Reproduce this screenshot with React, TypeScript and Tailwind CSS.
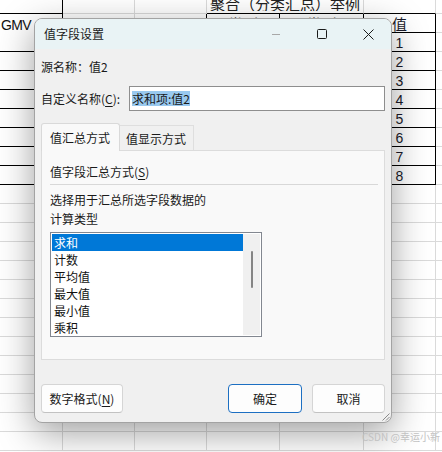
import React from "react";

const COLS = 7;
const ROWS = 24;

function cellClass(r: number, c: number): string {
  const inTable = r >= 1 && r <= 9;
  const rightBlack =
    (r === 0 && c === 0) || (inTable && (c === 0 || c === 2 || c === 3 || c === 4 || c === 5));
  const bottomBlack =
    (r === 0 && (c === 0 || c === 3 || c === 5)) ||
    (inTable && ((c === 0 && r !== 1) || c === 3 || c === 4 || c === 5));
  const bottomNone = r === 1 && c === 0;
  const right = rightBlack
    ? "border-r border-r-black"
    : c === 6
    ? ""
    : "border-r border-r-[#dadada]";
  const bottom = bottomNone ? "" : bottomBlack ? "border-b border-b-black" : "border-b border-b-[#dadada]";
  return `${right} ${bottom}`;
}

function cellContent(r: number, c: number): React.ReactNode {
  if (r === 0 && c === 3) {
    return (
      <div className="flex w-full justify-center overflow-hidden">
        <span className="mt-[-4px] whitespace-nowrap text-[15px] leading-[15px] text-[#222] font-['Noto_Sans_CJK_SC',sans-serif]">
          聚合（分类汇总）举例
        </span>
      </div>
    );
  }
  if (r === 1 && c === 0) {
    return (
      <div className="flex h-full items-center pl-[1px]">
        <span className="translate-y-[1px] text-[14px] leading-[14px] tracking-[-0.6px] text-[#111] font-['Liberation_Sans',sans-serif]">
          GMV
        </span>
      </div>
    );
  }
  if (r === 1 && (c === 3 || c === 4)) {
    return (
      <div className="flex h-full items-center justify-center text-[15px] leading-[15px] text-[#222] font-['Noto_Sans_CJK_SC',sans-serif]">
        类别
      </div>
    );
  }
  if (r === 1 && c === 5) {
    return (
      <div className="flex h-full items-center justify-center text-[15px] leading-[15px] text-[#1a1a2a] font-['Noto_Sans_CJK_SC',sans-serif]">
        值
      </div>
    );
  }
  if (r >= 2 && r <= 9 && c === 5) {
    return (
      <div className="flex h-full items-center justify-center pt-[1px] text-[14px] leading-[14px] text-[#1a1a2a] font-['Liberation_Sans',sans-serif]">
        {r - 1}
      </div>
    );
  }
  return null;
}

function Sheet() {
  const cells: React.ReactNode[] = [];
  for (let r = 0; r < ROWS; r++) {
    for (let c = 0; c < COLS; c++) {
      if (r === 0 && c === 4) continue;
      const span = r === 0 && c === 3 ? "col-span-2" : "";
      cells.push(
        <div key={`${r}-${c}`} className={`${cellClass(r, c)} ${span} min-w-0 overflow-visible`}>
          {cellContent(r, c)}
        </div>
      );
    }
  }
  return (
    <div className="grid grid-cols-[63px_72px_72px_73px_84px_72px_1fr] grid-rows-[14px_repeat(23,19px)]">
      {cells}
    </div>
  );
}

function Btn({ children, w, primary }: { children: React.ReactNode; w: string; primary?: boolean }) {
  return (
    <div
      className={`${w} flex h-[29px] items-center justify-center rounded-[4px] border bg-[#fdfdfd] text-[12px] leading-[16px] text-[#1a1a1a] ${
        primary ? "border-[#1c6fc2]" : "border-[#d5d5d5] border-b-[#c2c2c2]"
      }`}
    >
      {children}
    </div>
  );
}

function Dialog() {
  const items = ["求和", "计数", "平均值", "最大值", "最小值", "乘积"];
  return (
    <div className="absolute left-[34px] top-[18px] flex h-[405px] w-[358px] flex-col overflow-hidden rounded-[8px] border border-[#a3a3a3] bg-[#f0f0f0] shadow-[0_10px_36px_rgba(0,0,0,0.38)] font-['Noto_Sans_CJK_SC',sans-serif] text-[#1a1a1a]">
      <div className="flex h-[30px] shrink-0 items-center bg-[#e9f3f5]">
        <div className="pl-[9px] text-[12px] leading-[16px]">值字段设置</div>
        <div className="ml-auto flex h-full">
          <div className="flex h-full w-[46px] items-center justify-center">
            <svg width="10" height="10" viewBox="0 0 10 10">
              <line x1="1" y1="5.5" x2="9" y2="5.5" stroke="#a8a8a8" strokeWidth="1" />
            </svg>
          </div>
          <div className="flex h-full w-[46px] items-center justify-center">
            <svg width="10" height="10" viewBox="0 0 10 10">
              <rect x="0.5" y="0.5" width="9" height="9" rx="1" fill="none" stroke="#1a1a1a" strokeWidth="1" />
            </svg>
          </div>
          <div className="flex h-full w-[46px] items-center justify-center">
            <svg width="11" height="11" viewBox="0 0 11 11">
              <path d="M0.5 0.5 L10.5 10.5 M10.5 0.5 L0.5 10.5" stroke="#1a1a1a" strokeWidth="1" />
            </svg>
          </div>
        </div>
      </div>

      <div className="flex flex-1 flex-col px-[6px] pb-[9px]">
        <div className="mt-[10px] h-[16px] text-[12px] leading-[16px]">源名称：值2</div>

        <div className="mt-[11px] flex h-[25px] items-center">
          <div className="w-[88px] shrink-0 text-[12px] leading-[16px]">
            自定义名称(<span className="underline underline-offset-2">C</span>):
          </div>
          <div className="flex h-[25px] flex-1 items-center border border-[#8e8e8e] bg-white pl-[2px]">
            <span className="bg-[#99c9ef] text-[12px] leading-[15px]">求和项:值2</span>
          </div>
        </div>

        <div className="mt-[12px] flex h-[27px] items-end">
          <div className="relative z-10 -mb-px flex h-[28px] items-center rounded-t-[3px] border border-b-0 border-[#d9d9d9] bg-[#f9f9f9] pl-[8px] pr-[9px] text-[12px] leading-[16px]">
            值汇总方式
          </div>
          <div className="flex h-[25px] items-center border-r border-t border-[#dedede] bg-[#f0f0f0] pl-[6px] pr-[7px] pt-[1px] text-[12px] leading-[16px]">
            值显示方式
          </div>
        </div>

        <div className="flex h-[210px] flex-col border border-[#dcdcdc] bg-[#f9f9f9] pl-[8px] pr-[6px]">
          <div className="mt-[13px] h-[16px] text-[12px] leading-[16px]">
            值字段汇总方式(<span className="underline underline-offset-2">S</span>)
          </div>
          <div className="mt-[4px] h-px bg-[#d8d8d8]" />
          <div className="mt-[5px] text-[12px] leading-[19px]">
            <div>选择用于汇总所选字段数据的</div>
            <div>计算类型</div>
          </div>
          <div className="mt-[4px] flex h-[105px] w-[212px] border border-[#828790] bg-white p-px">
            <div className="flex w-[191px] flex-col">
              {items.map((it, i) => (
                <div
                  key={it}
                  className={`h-[17px] pl-[2px] text-[12px] leading-[17px] ${
                    i === 0 ? "bg-[#0078d7] text-white" : "text-[#111]"
                  }`}
                >
                  {it}
                </div>
              ))}
            </div>
            <div className="flex flex-1 justify-center bg-[#f0f0f0] pt-[17px]">
              <div className="h-[37px] w-[2px] rounded-full bg-[#858585]" />
            </div>
          </div>
        </div>

        <div className="mt-[24px] flex h-[29px] items-center">
          <Btn w="w-[82px]">
            数字格式(<span className="underline underline-offset-2">N</span>)
          </Btn>
          <div className="ml-auto flex gap-[10px]">
            <Btn w="w-[74px]" primary>
              确定
            </Btn>
            <Btn w="w-[73px]">取消</Btn>
          </div>
        </div>
      </div>

      <svg className="absolute bottom-[1px] right-[1px]" width="9" height="9" viewBox="0 0 9 9">
        <path d="M8.5 1.5 L1.5 8.5 M8.5 5 L5 8.5" stroke="#8a8a8a" strokeWidth="1" />
      </svg>
    </div>
  );
}

export default function App() {
  return (
    <div className="relative h-[452px] w-[442px] overflow-hidden bg-white">
      <Sheet />
      <Dialog />
      <div className="absolute left-[362px] top-[430px] whitespace-nowrap text-[10px] leading-[14px] text-[#c2c2c2] font-['Noto_Sans_CJK_SC',sans-serif]">
        CSDN @幸运小新
      </div>
    </div>
  );
}
